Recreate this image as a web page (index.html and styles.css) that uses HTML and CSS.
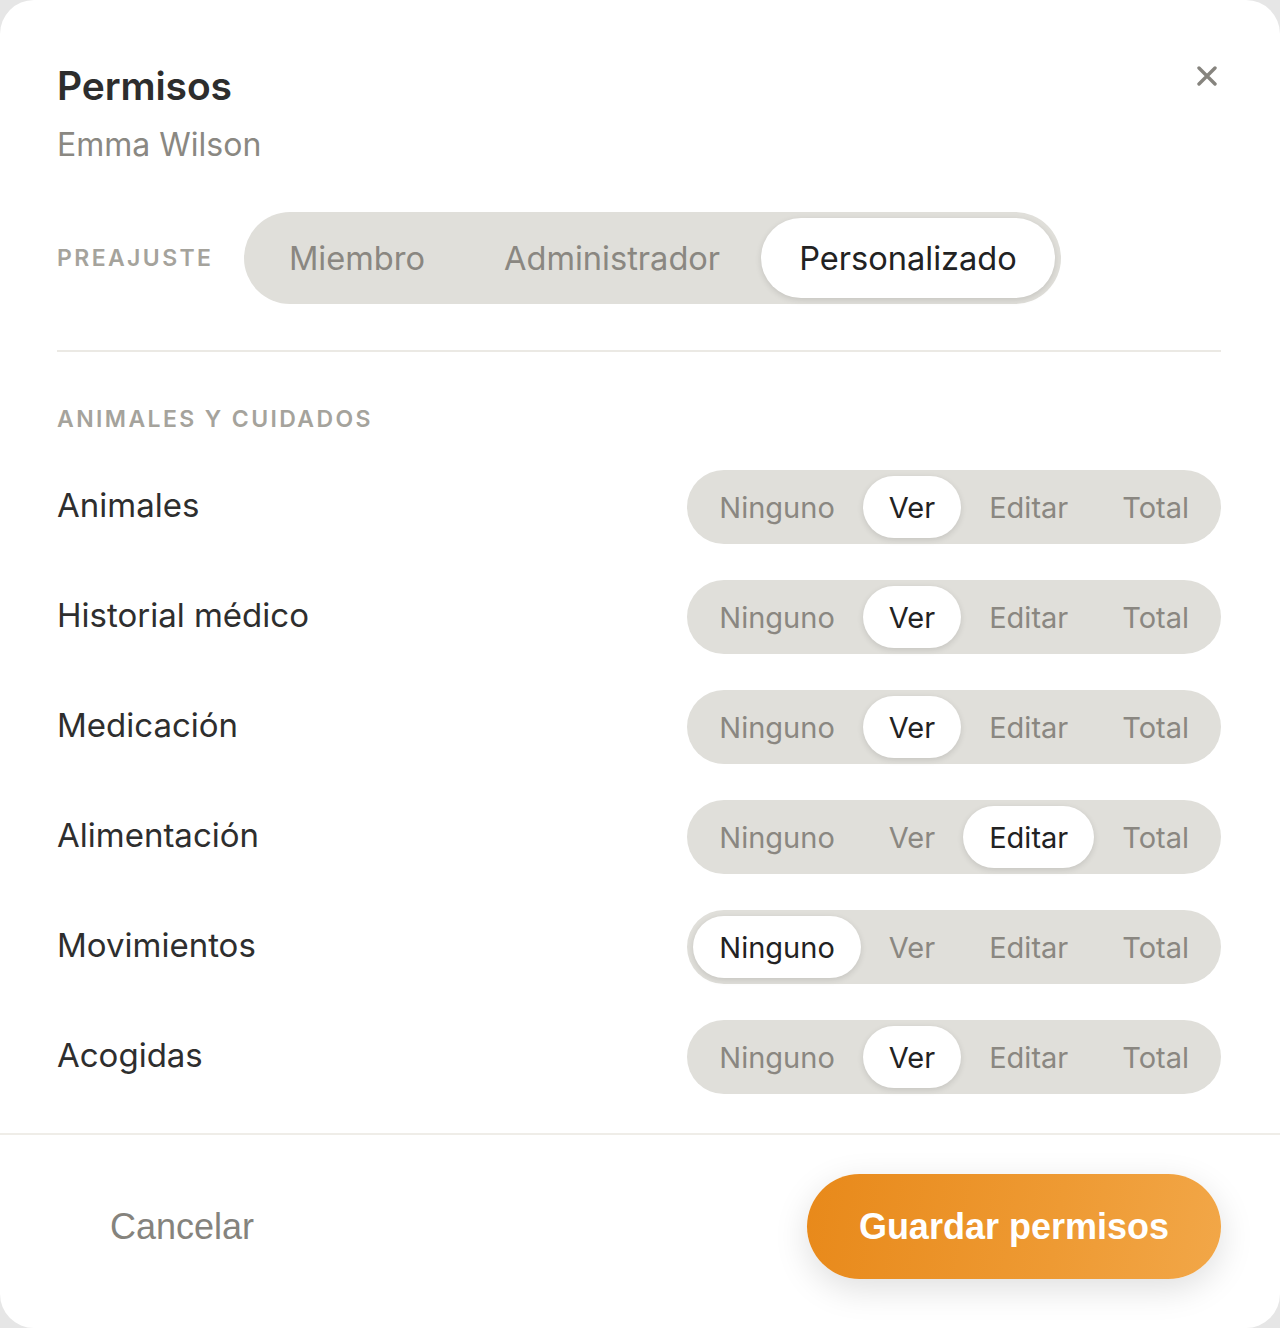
FILE: index.html
```html
<!DOCTYPE html>
<html lang="es">
<head>
<meta charset="utf-8">
<title>Permisos</title>
<link rel="stylesheet" href="styles.css">
</head>
<body>
<div class="modal">
  <div class="body">
    <header class="header">
      <div>
        <h1 class="title">Permisos</h1>
        <p class="subtitle">Emma Wilson</p>
      </div>
      <button class="close" aria-label="Cerrar">
        <svg width="20" height="20" viewBox="0 0 20 20"><path d="M2 2 L18 18 M18 2 L2 18" stroke="#86847e" stroke-width="3.4" stroke-linecap="round" fill="none"/></svg>
      </button>
    </header>

    <div class="preset">
      <span class="caps">PREAJUSTE</span>
      <div class="seg seg-lg">
        <span class="opt">Miembro</span>
        <span class="opt">Administrador</span>
        <span class="opt active">Personalizado</span>
      </div>
    </div>

    <hr class="divider">

    <div class="caps section">ANIMALES Y CUIDADOS</div>

    <div class="rows">
      <div class="row"><span class="label">Animales</span>
        <div class="seg"><span class="opt">Ninguno</span><span class="opt active">Ver</span><span class="opt">Editar</span><span class="opt">Total</span></div></div>
      <div class="row"><span class="label">Historial médico</span>
        <div class="seg"><span class="opt">Ninguno</span><span class="opt active">Ver</span><span class="opt">Editar</span><span class="opt">Total</span></div></div>
      <div class="row"><span class="label">Medicación</span>
        <div class="seg"><span class="opt">Ninguno</span><span class="opt active">Ver</span><span class="opt">Editar</span><span class="opt">Total</span></div></div>
      <div class="row"><span class="label">Alimentación</span>
        <div class="seg"><span class="opt">Ninguno</span><span class="opt">Ver</span><span class="opt active">Editar</span><span class="opt">Total</span></div></div>
      <div class="row"><span class="label">Movimientos</span>
        <div class="seg"><span class="opt active">Ninguno</span><span class="opt">Ver</span><span class="opt">Editar</span><span class="opt">Total</span></div></div>
      <div class="row"><span class="label">Acogidas</span>
        <div class="seg"><span class="opt">Ninguno</span><span class="opt active">Ver</span><span class="opt">Editar</span><span class="opt">Total</span></div></div>
    </div>
  </div>

  <footer class="footer">
    <button class="btn btn-ghost">Cancelar</button>
    <button class="btn btn-primary">Guardar permisos</button>
  </footer>
</div>
</body>
</html>
```

FILE: styles.css
```css
* { box-sizing: border-box; }
html, body { margin: 0; padding: 0; }
body {
  background: #e6e6e6;
  font-family: Inter, "Noto Sans", sans-serif;
  color: #2d2d2d;
}
.modal {
  width: 1280px;
  height: 1328px;
  background: #ffffff;
  border-radius: 34px;
  overflow: hidden;
  display: flex;
  flex-direction: column;
}
.body {
  padding: 62px 59px 37px 57px;
  flex: 1;
}
.header {
  display: flex;
  justify-content: space-between;
  align-items: flex-start;
}
.title {
  margin: 0;
  font-size: 39px;
  line-height: 48px;
  font-weight: 600;
  color: #2d2d2d;
  letter-spacing: -0.1px;
}
.subtitle {
  margin: 16px 0 0;
  font-size: 32px;
  line-height: 38px;
  color: #8a8882;
}
.close {
  width: 28px;
  height: 28px;
  margin-top: 0;
  padding: 4px;
  border: 0;
  background: transparent;
  display: flex;
  align-items: center;
  justify-content: center;
}
.caps {
  font-size: 23px;
  line-height: 30px;
  font-weight: 600;
  letter-spacing: 2.4px;
  color: #a5a39c;
}
.preset {
  margin-top: 48px;
  display: flex;
  align-items: center;
  gap: 31px;
}
.seg {
  display: flex;
  align-items: center;
  gap: 2px;
  padding: 6px;
  background: #e0dfda;
  border-radius: 999px;
}
.opt {
  display: flex;
  align-items: center;
  height: 62px;
  padding: 0 26px;
  border-radius: 999px;
  font-size: 29px;
  color: #8a8781;
  white-space: nowrap;
}
.opt.active {
  background: #ffffff;
  color: #222222;
  box-shadow: 0 2px 6px rgba(0, 0, 0, 0.12);
}
.seg-lg { gap: 2px; }
.seg-lg .opt {
  height: 80px;
  padding: 0 38.5px;
  font-size: 32.6px;
}
.divider {
  margin: 46px 0 0;
  border: 0;
  height: 2px;
  background: #ebe9e4;
}
.section {
  margin-top: 52px;
}
.rows {
  margin-top: 36px;
  display: flex;
  flex-direction: column;
  gap: 36px;
}
.row {
  display: flex;
  justify-content: space-between;
  align-items: center;
}
.label {
  font-size: 33px;
  color: #2e2e2e;
  margin-top: -4px;
}
.footer {
  border-top: 2px solid #efede8;
  padding: 39px 59px 49px 57px;
  display: flex;
  justify-content: space-between;
  align-items: center;
}
.btn {
  border: 0;
  border-radius: 999px;
  height: 105px;
  padding: 0 52px;
  font-family: "Liberation Sans", Arial, sans-serif;
  font-size: 36px;
}
.btn-ghost {
  background: transparent;
  color: #85837d;
  padding: 0 53px;
}
.btn-primary {
  background: linear-gradient(100deg, #e8891a 0%, #ee9a33 60%, #f2a748 100%);
  color: #ffffff;
  font-weight: 700;
  box-shadow: 0 10px 34px rgba(0, 0, 0, 0.13);
}
```
